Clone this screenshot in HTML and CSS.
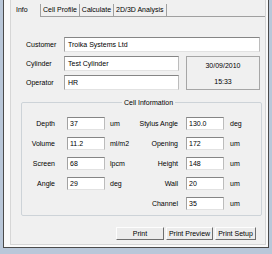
FILE: index.html
```html
<!DOCTYPE html>
<html lang="en">
<head>
    <meta charset="UTF-8">
    <title>Info</title>
    <link rel="stylesheet" href="styles.css">
</head>
<body>
    <div class="window">
        <div class="client">
            <div class="tabs">
                <span class="tab active">Info</span>
                <span class="tab">Cell Profile</span>
                <span class="tab">Calculate</span>
                <span class="tab last">2D/3D Analysis</span>
                <span class="tab-fill"></span>
            </div>

            <div class="header">
                <span class="label row-1">Customer</span>
                <span class="field wide row-1">Troika Systems Ltd</span>
                <span class="label row-2">Cylinder</span>
                <span class="field row-2">Test Cylinder</span>
                <span class="label row-3">Operator</span>
                <span class="field row-3">HR</span>
                <div class="stamp">
                    <span>30/09/2010</span>
                    <span>15:33</span>
                </div>
            </div>

            <fieldset class="cell-info">
                <legend>Cell Information</legend>
                <div class="cell-grid">
                    <span class="label">Depth</span>
                    <span class="field">37</span>
                    <span class="unit">um</span>
                    <span class="label">Stylus Angle</span>
                    <span class="field">130.0</span>
                    <span class="unit">deg</span>

                    <span class="label">Volume</span>
                    <span class="field">11.2</span>
                    <span class="unit">ml/m2</span>
                    <span class="label">Opening</span>
                    <span class="field">172</span>
                    <span class="unit">um</span>

                    <span class="label">Screen</span>
                    <span class="field">68</span>
                    <span class="unit">lpcm</span>
                    <span class="label">Height</span>
                    <span class="field">148</span>
                    <span class="unit">um</span>

                    <span class="label">Angle</span>
                    <span class="field">29</span>
                    <span class="unit">deg</span>
                    <span class="label">Wall</span>
                    <span class="field">20</span>
                    <span class="unit">um</span>

                    <span class="label right-col">Channel</span>
                    <span class="field">35</span>
                    <span class="unit">um</span>
                </div>
            </fieldset>

            <div class="buttons">
                <button class="btn print">Print</button>
                <button class="btn preview">Print Preview</button>
                <button class="btn setup">Print Setup</button>
            </div>
        </div>
    </div>
</body>
</html>
```

FILE: styles.css
```css
body {
    margin: 0;
    background-color: #b9c7d9;
    font-family: "Liberation Sans", Arial, sans-serif;
    font-size: 7px;
    color: #000;
}
.window {
    box-sizing: border-box;
    width: 266px;
    height: 248px;
    margin-left: 3px;
    padding: 0 2px 2px 6px;
    background-color: #fafafa;
    border: 1px solid #4b4b4b;
    border-top: none;
}
.client {
    box-sizing: border-box;
    height: 100%;
    background-color: #f0f0f0;
    border: 1px solid #d6d6d6;
    border-top: none;
}
.tabs {
    display: flex;
    align-items: flex-end;
    height: 17px;
    white-space: nowrap;
}
.tab {
    height: 12px;
    line-height: 12px;
    padding: 0 2px;
    border-left: 1px solid #a0a0a0;
    border-bottom: 1px solid #a0a0a0;
}
.tab.active {
    box-sizing: border-box;
    width: 29px;
    height: 13px;
    padding-left: 5px;
    border: none;
}
.tab.last {
    border-right: 1px solid #a0a0a0;
}
.tab-fill {
    flex: 1;
    border-bottom: 1px solid #a0a0a0;
}
.header {
    display: grid;
    grid-template-columns: 38px 115px 7px 74px;
    grid-template-rows: 15px 15px 15px;
    row-gap: 4px;
    margin: 20px 0 0 15px;
}
.header .label {
    grid-column: 1;
}
.header .field {
    grid-column: 2;
}
.header .field.wide {
    grid-column: 2 / span 3;
}
.row-1 { grid-row: 1; }
.row-2 { grid-row: 2; }
.row-3 { grid-row: 3; }
.label {
    align-self: center;
    white-space: nowrap;
}
.field {
    box-sizing: border-box;
    height: 15px;
    line-height: 13px;
    padding: 0 3px;
    background-color: #fff;
    border: 1px solid;
    border-color: #858585 #bcbcbc #e2e2e2 #a2a2a2;
    white-space: nowrap;
}
.stamp {
    grid-column: 4;
    grid-row: 2 / span 2;
    display: flex;
    flex-direction: column;
    justify-content: space-around;
    align-items: center;
    border: 1px solid #a6a6a6;
}
.cell-info {
    margin: 9px 3px 0 10px;
    padding: 11px 0 5px 0;
    border: 1px solid #cdd3d8;
    border-radius: 2px;
}
.cell-info legend {
    margin-left: 100px;
    padding: 0 2px;
}
.cell-grid {
    display: grid;
    grid-template-columns: 45px 43px 28px 48px 44px 1fr;
    grid-auto-rows: 13px;
    row-gap: 7px;
}
.cell-grid .label {
    text-align: right;
    padding-right: 12px;
}
.cell-grid .label:nth-child(6n+4),
.cell-grid .label.right-col {
    padding-right: 8px;
}
.cell-grid .label.right-col {
    grid-column: 4;
}
.cell-grid .field {
    width: 38px;
    height: 13px;
    line-height: 11px;
    padding: 0 2px;
}
.unit {
    align-self: center;
}
.buttons {
    display: flex;
    justify-content: flex-end;
    gap: 2px;
    margin: 11px 9px 0 0;
}
.btn {
    box-sizing: border-box;
    height: 13px;
    padding: 0;
    font-family: inherit;
    font-size: 7px;
    color: #000;
    background-color: #ececec;
    border: 1px solid;
    border-color: #fdfdfd #6f6f6f #6f6f6f #fdfdfd;
    border-radius: 0;
}
.btn.print {
    width: 48px;
}
.btn.preview {
    width: 47px;
}
.btn.setup {
    width: 41px;
}
```
